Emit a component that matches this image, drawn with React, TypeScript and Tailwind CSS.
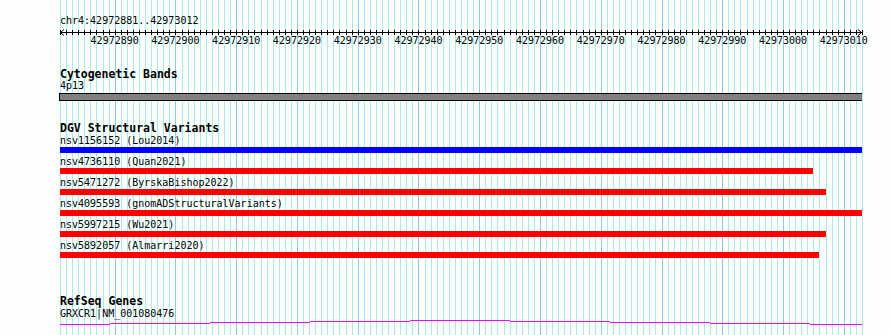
import React from 'react';

const START = 42972881;
const END = 42973012;
const BASES = END - START + 1;
const LEFT = 60;
const WIDTH = 802;
const PPB = WIDTH / BASES;

const variants = [
  { id: 'nsv1156152', study: 'Lou2014', end: 132, color: 'bg-[#0000ff]' },
  { id: 'nsv4736110', study: 'Quan2021', end: 124, color: 'bg-[#ff0000]' },
  { id: 'nsv5471272', study: 'ByrskaBishop2022', end: 126, color: 'bg-[#ff0000]' },
  { id: 'nsv4095593', study: 'gnomADStructuralVariants', end: 132, color: 'bg-[#ff0000]' },
  { id: 'nsv5997215', study: 'Wu2021', end: 126, color: 'bg-[#ff0000]' },
  { id: 'nsv5892057', study: 'Almarri2020', end: 125, color: 'bg-[#ff0000]' },
];

const Grid = () => {
  const lines = [];
  for (let i = 0; i <= BASES; i++) {
    const x = Math.round(LEFT + i * PPB) + 0.5;
    const major = (START + i) % 10 === 0;
    lines.push(
      <line key={i} x1={x} x2={x} y1={0} y2={335} stroke={major ? '#8ec8ec' : '#aaecec'} strokeWidth={1} />
    );
  }
  return (
    <svg className="absolute inset-0" width={890} height={335} shapeRendering="crispEdges">
      {lines}
    </svg>
  );
};

const Ruler = () => {
  const ticks = [];
  const labels = [];
  for (let i = 0; i <= BASES; i++) {
    const x = Math.round(i * PPB) + 0.5;
    ticks.push(<line key={i} x1={x} x2={x} y1={3} y2={8} stroke="#000" />);
    const b = START + i;
    if (b % 10 === 0 && b <= END) {
      labels.push(
        <text key={'l' + b} x={i * PPB} y={17} textAnchor="middle" fontSize={10} fontFamily="'DejaVu Sans Mono', monospace" fill="#000">
          {b}
        </text>
      );
    }
  }
  return (
    <svg width={WIDTH + 2} height={21} className="block overflow-visible" shapeRendering="crispEdges">
      <line x1={0} x2={WIDTH} y1={5.5} y2={5.5} stroke="#000" />
      <polyline points="4,2.5 0.5,5.5 4,8.5" fill="none" stroke="#000" shapeRendering="auto" />
      <polyline points={`${WIDTH - 4},2.5 ${WIDTH - 0.5},5.5 ${WIDTH - 4},8.5`} fill="none" stroke="#000" shapeRendering="auto" />
      {ticks}
      {labels}
    </svg>
  );
};

const TrackTitle = ({ children }: { children: React.ReactNode }) => (
  <div className="text-[11.5px] leading-[12px] font-bold text-black">{children}</div>
);

const Label = ({ children }: { children: React.ReactNode }) => (
  <div className="text-[10px] leading-[13px] text-black whitespace-pre">{children}</div>
);

const IntronLine = () => {
  // stepped hat line, peaking mid-view
  const steps = [
    [0, 50, 4], [50, 150, 3], [150, 250, 2], [250, 350, 1], [350, 450, 0],
    [450, 550, 1], [550, 650, 2], [650, 750, 3], [750, 802, 4],
  ];
  return (
    <svg width={WIDTH} height={6} className="block" shapeRendering="crispEdges">
      {steps.map(([a, b, y], i) => (
        <line key={i} x1={a} x2={b} y1={y + 0.5} y2={y + 0.5} stroke="#ff00ff" />
      ))}
    </svg>
  );
};

export default function App() {
  return (
    <div className="relative w-[890px] h-[335px] overflow-hidden bg-[#fcfefc] font-['DejaVu_Sans_Mono',monospace]">
      <Grid />
      <div className="relative pl-[60px] pt-[15px]">
        {/* Ruler */}
        <div className="text-[10px] leading-[12px] text-black">chr4:42972881..42973012</div>
        <Ruler />

        {/* Cytogenetic Bands */}
        <div className="mt-[20px]">
          <TrackTitle>Cytogenetic Bands</TrackTitle>
          <div className="text-[10px] leading-[12px] text-black">4p13</div>
          <div className="mt-[1px] -ml-[1px] h-[8px] w-[803px] bg-[#808080] border-y border-l border-black" />
        </div>

        {/* DGV Structural Variants */}
        <div className="mt-[21px]">
          <TrackTitle>DGV Structural Variants</TrackTitle>
          <div className="flex flex-col gap-[2px]">
            {variants.map((v) => (
              <div key={v.id}>
                <Label>{`${v.id} (${v.study})`}</Label>
                <div className={`h-[6px] ${v.color}`} style={{ width: Math.round(v.end * PPB) }} />
              </div>
            ))}
          </div>
        </div>

        {/* RefSeq Genes */}
        <div className="mt-[37px]">
          <TrackTitle>RefSeq Genes</TrackTitle>
          <div className="text-[10px] leading-[13px] text-black">GRXCR1|NM_001080476</div>
          <IntronLine />
        </div>
      </div>
    </div>
  );
}
